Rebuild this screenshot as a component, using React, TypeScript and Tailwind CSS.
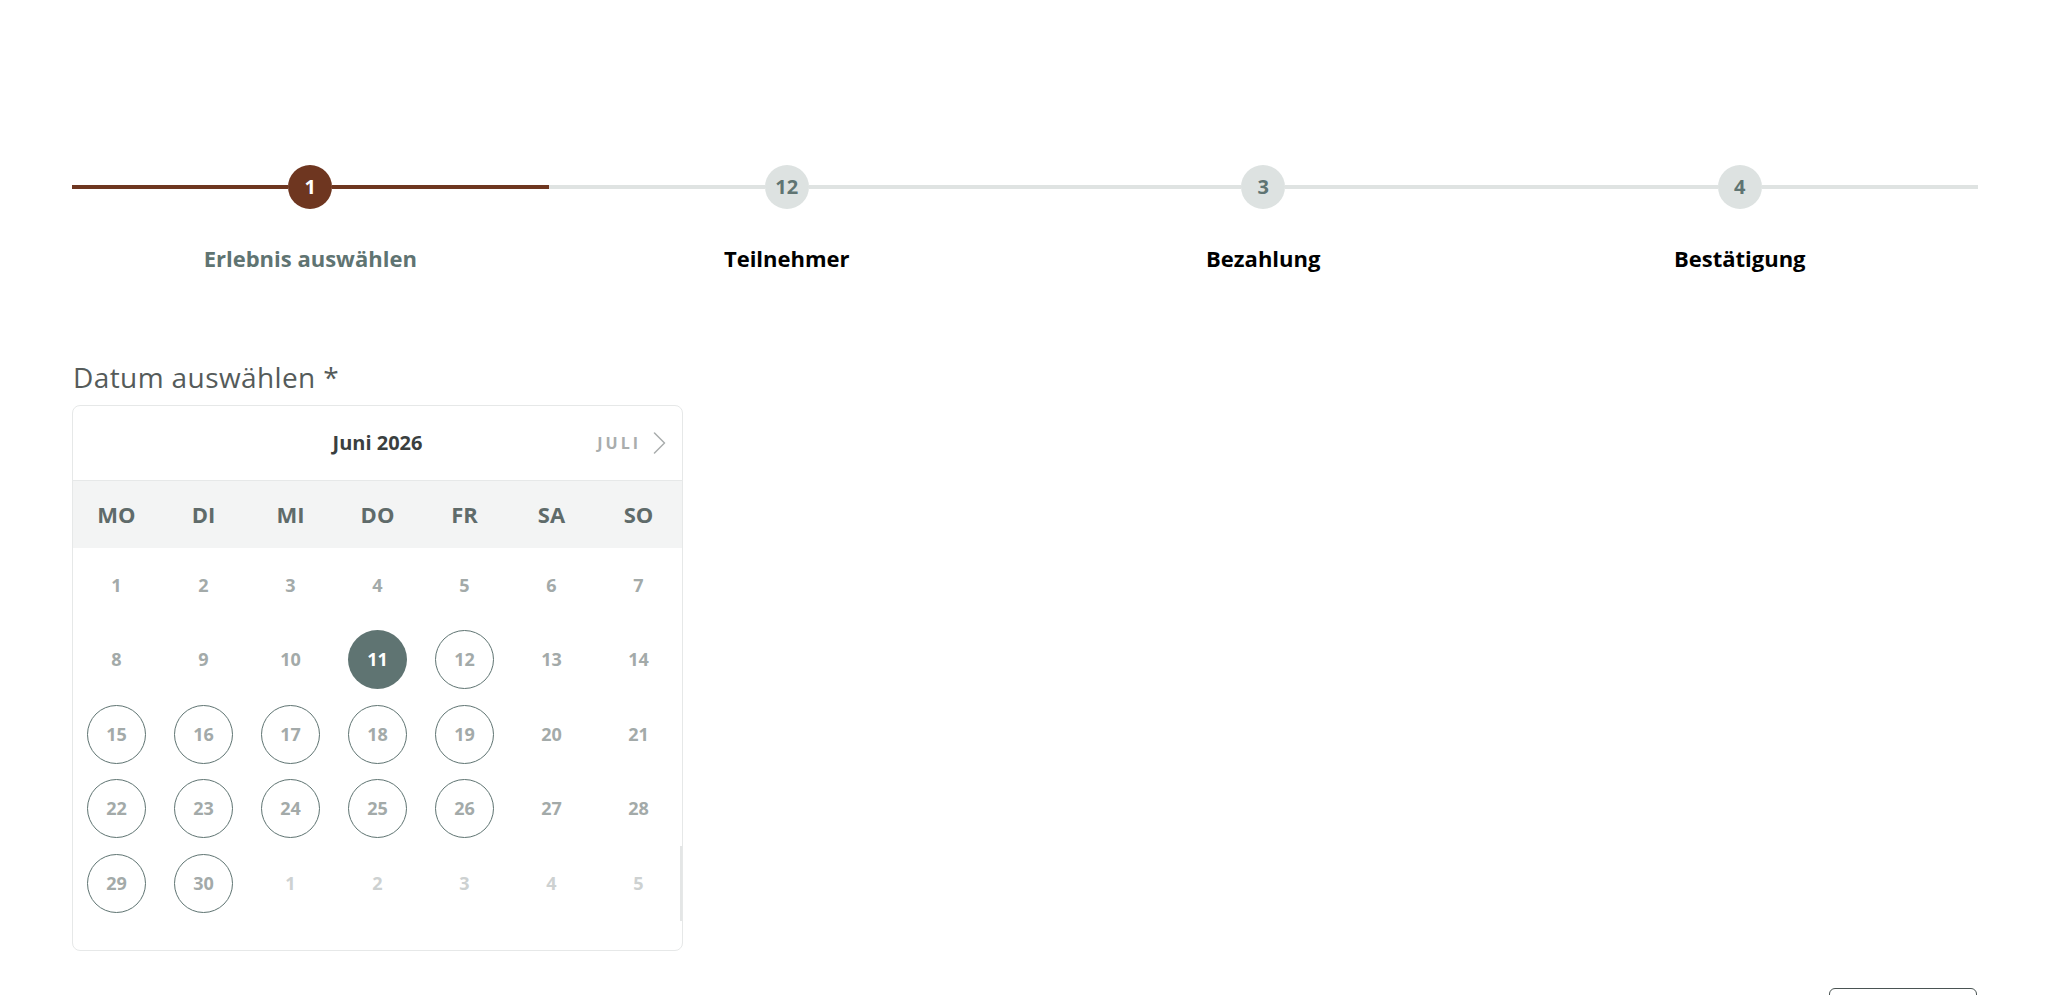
import React from "react";

const steps = [
  { n: "1", label: "Erlebnis auswählen", active: true },
  { n: "12", label: "Teilnehmer", active: false },
  { n: "3", label: "Bezahlung", active: false },
  { n: "4", label: "Bestätigung", active: false },
];

const weekdays = ["MO", "DI", "MI", "DO", "FR", "SA", "SO"];

type Day = { d: number; kind: "past" | "avail" | "selected" | "off" | "next" };

const rows: Day[][] = [
  [1, 2, 3, 4, 5, 6, 7].map((d) => ({ d, kind: "past" as const })),
  [
    { d: 8, kind: "past" },
    { d: 9, kind: "past" },
    { d: 10, kind: "past" },
    { d: 11, kind: "selected" },
    { d: 12, kind: "avail" },
    { d: 13, kind: "off" },
    { d: 14, kind: "off" },
  ],
  [
    { d: 15, kind: "avail" },
    { d: 16, kind: "avail" },
    { d: 17, kind: "avail" },
    { d: 18, kind: "avail" },
    { d: 19, kind: "avail" },
    { d: 20, kind: "off" },
    { d: 21, kind: "off" },
  ],
  [
    { d: 22, kind: "avail" },
    { d: 23, kind: "avail" },
    { d: 24, kind: "avail" },
    { d: 25, kind: "avail" },
    { d: 26, kind: "avail" },
    { d: 27, kind: "off" },
    { d: 28, kind: "off" },
  ],
  [
    { d: 29, kind: "avail" },
    { d: 30, kind: "avail" },
    { d: 1, kind: "next" },
    { d: 2, kind: "next" },
    { d: 3, kind: "next" },
    { d: 4, kind: "next" },
    { d: 5, kind: "next" },
  ],
];

function DayCell({ day }: { day: Day }) {
  if (day.kind === "selected") {
    return (
      <div className="flex h-[74.5px] items-center justify-center">
        <div className="flex h-[59px] w-[59px] items-center justify-center rounded-full bg-[#5f7472] text-[18px] font-bold text-white">
          {day.d}
        </div>
      </div>
    );
  }
  if (day.kind === "avail") {
    return (
      <div className="flex h-[74.5px] items-center justify-center">
        <div className="flex h-[59px] w-[59px] items-center justify-center rounded-full border-[1.5px] border-[#5f7472] text-[18px] font-bold text-[#a3aaa9]">
          {day.d}
        </div>
      </div>
    );
  }
  return (
    <div
      className={
        day.kind === "next"
          ? "flex h-[74.5px] items-center justify-center text-[18px] font-bold text-[#cdd1d1]"
          : "flex h-[74.5px] items-center justify-center text-[18px] font-bold text-[#a3aaa9]"
      }
    >
      {day.d}
    </div>
  );
}

export default function App() {
  return (
    <div
      className="min-h-screen bg-white pb-[40px]"
      style={{ fontFamily: '"Open Sans", "Liberation Sans", sans-serif' }}
    >
      <div className="pl-[72px] pr-[70px] pt-[165px]">
        {/* Stepper */}
        <div className="grid grid-cols-4">
          {steps.map((s, i) => (
            <div key={i} className="flex flex-col">
              <div className="flex h-[44px] items-center">
                <div
                  className={
                    s.active ? "h-[4px] flex-1 bg-[#6e3620]" : "h-[4px] flex-1 bg-[#dfe3e2]"
                  }
                />
                <div
                  className={
                    s.active
                      ? "flex h-[44px] w-[44px] items-center justify-center rounded-full bg-[#6e3620] text-[20px] font-bold text-white"
                      : "flex h-[44px] w-[44px] items-center justify-center rounded-full bg-[#dde2e1] text-[20px] font-bold text-[#5f7472]"
                  }
                >
                  {s.n}
                </div>
                <div
                  className={
                    s.active ? "h-[4px] flex-1 bg-[#6e3620]" : "h-[4px] flex-1 bg-[#dfe3e2]"
                  }
                />
              </div>
              <div
                className={
                  s.active
                    ? "mt-[34px] text-center text-[22px] font-bold leading-[30px] text-[#5f7472]"
                    : "mt-[34px] text-center text-[22px] font-bold leading-[30px] text-black"
                }
              >
                {s.label}
              </div>
            </div>
          ))}
        </div>

        {/* Date label */}
        <div className="ml-[1px] mt-[86px] text-[28px] font-normal leading-[36px] tracking-[0.4px] text-[#555b5a]">
          Datum auswählen *
        </div>

        {/* Calendar */}
        <div className="relative mt-[10px] w-[611px] overflow-hidden rounded-[8px] border border-[#e6e8e8] bg-white">
          <div className="relative flex h-[75px] items-center justify-center border-b border-[#e6e8e8]">
            <span className="text-[20px] font-bold text-[#3a3f3f]">Juni 2026</span>
            <div className="absolute right-[16px] top-0 flex h-full items-center gap-[12px]">
              <span className="text-[16px] font-bold tracking-[3px] text-[#a9adad]">JULI</span>
              <svg width="13" height="22" viewBox="0 0 13 22" fill="none">
                <polyline
                  points="1.5,1 11.5,11 1.5,21"
                  stroke="#a9adad"
                  strokeWidth="1.5"
                  strokeLinecap="round"
                  strokeLinejoin="round"
                />
              </svg>
            </div>
          </div>
          <div className="grid h-[67px] grid-cols-7 items-center bg-[#f3f4f4]">
            {weekdays.map((w) => (
              <div key={w} className="text-center text-[22px] font-bold text-[#5f6b6a]">
                {w}
              </div>
            ))}
          </div>
          <div className="relative pb-[29px]">
            {rows.map((r, ri) => (
              <div key={ri} className="grid grid-cols-7">
                {r.map((d, di) => (
                  <DayCell key={di} day={d} />
                ))}
              </div>
            ))}
            <div className="absolute right-[0px] top-[298px] h-[75px] w-[2px] bg-[#e4e6e6]" />
          </div>
        </div>

        <div className="mt-[37px] flex justify-end pr-[1px]">
          <button
            type="button"
            className="h-[64px] w-[148px] rounded-[6px] border-[1.5px] border-[#4a5453] bg-white"
          />
        </div>
      </div>
    </div>
  );
}
